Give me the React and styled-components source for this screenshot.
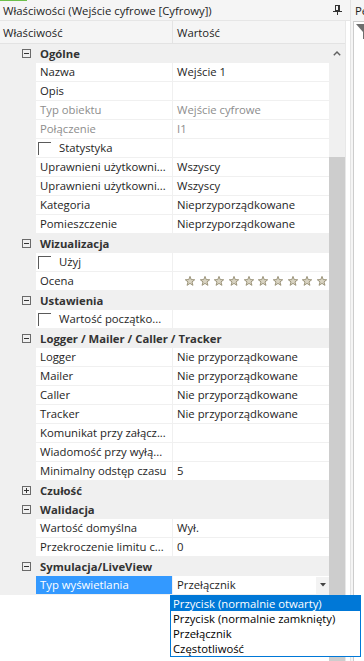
import React from "react";
import styled, { createGlobalStyle } from "styled-components";

const GlobalStyle = createGlobalStyle`
  html, body {
    margin: 0;
    padding: 0;
    background: #ffffff;
  }
  body {
    font-family: "Open Sans", "Noto Sans", sans-serif;
    font-size: 11.3px;
    color: #1e1e1e;
  }
`;

const sections = [
  {
    title: "Ogólne",
    open: true,
    rows: [
      { name: "Nazwa", value: "Wejście 1" },
      { name: "Opis", value: "" },
      { name: "Typ obiektu", value: "Wejście cyfrowe", disabled: true },
      { name: "Połączenie", value: "I1", disabled: true },
      { name: "Statystyka", check: true },
      { name: "Uprawnieni użytkowni...", value: "Wszyscy" },
      { name: "Uprawnieni użytkowni...", value: "Wszyscy" },
      { name: "Kategoria", value: "Nieprzyporządkowane" },
      { name: "Pomieszczenie", value: "Nieprzyporządkowane" },
    ],
  },
  {
    title: "Wizualizacja",
    open: true,
    rows: [
      { name: "Użyj", check: true },
      { name: "Ocena", stars: 10 },
    ],
  },
  {
    title: "Ustawienia",
    open: true,
    rows: [{ name: "Wartość początko...", check: true }],
  },
  {
    title: "Logger / Mailer / Caller / Tracker",
    open: true,
    rows: [
      { name: "Logger", value: "Nie przyporządkowane" },
      { name: "Mailer", value: "Nie przyporządkowane" },
      { name: "Caller", value: "Nie przyporządkowane" },
      { name: "Tracker", value: "Nie przyporządkowane" },
      { name: "Komunikat przy załącz...", value: "" },
      { name: "Wiadomość przy wyłą...", value: "" },
      { name: "Minimalny odstęp czasu", value: "5" },
    ],
  },
  { title: "Czułość", open: false, rows: [] },
  {
    title: "Walidacja",
    open: true,
    rows: [
      { name: "Wartość domyślna", value: "Wył." },
      { name: "Przekroczenie limitu c...", value: "0" },
    ],
  },
  {
    title: "Symulacja/LiveView",
    open: true,
    rows: [{ name: "Typ wyświetlania", value: "Przełącznik", selected: true, combo: true }],
  },
];

const options = [
  "Przycisk (normalnie otwarty)",
  "Przycisk (normalnie zamknięty)",
  "Przełącznik",
  "Częstotliwość",
];

const Window = styled.div`
  position: relative;
  width: 364px;
  height: 661px;
  display: flex;
  overflow: hidden;
  background: #ffffff;
`;

const LeftPanel = styled.div`
  width: 350px;
  display: flex;
  flex-direction: column;
`;

const TitleBar = styled.div`
  position: relative;
  height: 20px;
  border-bottom: 1px solid #e6e6e6;
  background: #f5f5f5;
  display: flex;
  align-items: center;
  justify-content: space-between;
  padding: 0 8px 0 3px;
  white-space: nowrap;
`;

const AccentLine = styled.div`
  position: absolute;
  left: 0;
  top: 0;
  width: 27px;
  height: 1px;
  background: #6cbf4a;
`;

const Content = styled.div`
  flex: 1;
  display: flex;
  padding-right: 4px;
`;

const Main = styled.div`
  width: 346px;
  display: flex;
  flex-direction: column;
  border-right: 1px solid #e8e8e8;
  box-sizing: border-box;
`;

const Header = styled.div`
  height: 22px;
  border-bottom: 1px solid #e3e3e3;
  background: #f5f5f5;
  display: flex;
  align-items: center;
`;

const HeaderCell = styled.div`
  width: ${(p) => p.$width || "auto"};
  flex: ${(p) => (p.$width ? "none" : 1)};
  height: 100%;
  display: flex;
  align-items: center;
  padding-left: ${(p) => p.$pad || "4px"};
  box-sizing: border-box;
  border-right: ${(p) => (p.$line ? "1px solid #e3e3e3" : "none")};
`;

const Body = styled.div`
  flex: 1;
  display: flex;
`;

const Grid = styled.div`
  width: 330px;
  display: flex;
  flex-direction: column;
`;

const CategoryRow = styled.div`
  height: 19px;
  display: flex;
  align-items: center;
  background: #f0f0f0;
  font-weight: 700;
  color: #333333;
  white-space: nowrap;
`;

const Gutter = styled.div`
  width: 36px;
  height: 100%;
  flex: none;
  background: #f0f0f0;
  display: flex;
  align-items: center;
  justify-content: flex-end;
  padding-right: 5px;
  box-sizing: border-box;
`;

const CategoryLabel = styled.div`
  padding-left: 4px;
  line-height: 18px;
`;

const Row = styled.div`
  height: 19px;
  display: flex;
`;

const NameCell = styled.div`
  width: 137px;
  flex: none;
  box-sizing: border-box;
  border-right: 1px solid #f0f0f0;
  border-bottom: 1px solid #f0f0f0;
  background: ${(p) => (p.$selected ? "#3399ff" : "#ffffff")};
  color: ${(p) => (p.$selected ? "#ffffff" : p.$disabled ? "#8d8d8d" : "#1e1e1e")};
  display: flex;
  align-items: center;
  padding-left: ${(p) => (p.$check ? "2px" : "4px")};
  white-space: nowrap;
  overflow: hidden;
  line-height: 18px;
`;

const ValueCell = styled.div`
  flex: 1;
  box-sizing: border-box;
  border-bottom: 1px solid #f0f0f0;
  color: ${(p) => (p.$disabled ? "#8d8d8d" : "#1e1e1e")};
  display: flex;
  align-items: center;
  padding-left: 4px;
  white-space: nowrap;
  overflow: hidden;
  line-height: 18px;
`;

const CheckBox = styled.span`
  width: 12px;
  height: 12px;
  flex: none;
  border-top: 1px solid #5a5a5a;
  border-left: 1px solid #5a5a5a;
  margin-right: 8px;
`;

const Stars = styled.div`
  display: flex;
  gap: 4.67px;
  padding-left: 8px;
`;

const ComboText = styled.span`
  flex: 1;
`;

const ComboButton = styled.div`
  width: 13px;
  height: 17px;
  background: #f3f3f3;
  display: flex;
  align-items: center;
  justify-content: center;
`;

const Scrollbar = styled.div`
  width: 16px;
  background: #f0f0f0;
  display: flex;
  flex-direction: column;
`;

const ScrollArrow = styled.div`
  height: 19px;
  display: flex;
  align-items: center;
  justify-content: center;
`;

const ScrollTrack = styled.div`
  height: 94px;
`;

const ScrollThumb = styled.div`
  flex: 1;
  background: #cdcdcd;
`;

const RightPanel = styled.div`
  flex: 1;
  border-left: 1px solid #e3e3e3;
  background: #f5f5f5;
  display: flex;
  flex-direction: column;
`;

const RightTitle = styled.div`
  height: 21px;
  display: flex;
  align-items: center;
  padding-left: 4px;
  white-space: nowrap;
`;

const RightBox = styled.div`
  flex: 1;
  margin-left: 2px;
  border-left: 1px solid #cccccc;
  border-top: 1px solid #cccccc;
  background: #ffffff;
  padding: 2px 0 0 2px;
`;

const Dropdown = styled.div`
  position: absolute;
  left: 170px;
  top: 595px;
  width: 191px;
  border: 1px solid #0078d7;
  background: #ffffff;
  box-sizing: border-box;
`;

const Option = styled.div`
  height: 15px;
  line-height: 15px;
  padding-left: 2px;
  white-space: nowrap;
  background: ${(p) => (p.$active ? "#0078d7" : "transparent")};
  color: ${(p) => (p.$active ? "#ffffff" : "#000000")};
`;

const Expander = ({ open }) => (
  <svg width="9" height="9" viewBox="0 0 9 9">
    <rect x="0.5" y="0.5" width="8" height="8" fill="none" stroke="#6a6a6a" />
    <line x1="2" y1="4.5" x2="7" y2="4.5" stroke="#333" />
    {!open && <line x1="4.5" y1="2" x2="4.5" y2="7" stroke="#333" />}
  </svg>
);

const Star = () => (
  <svg width="10" height="10" viewBox="0 0 10 10">
    <polygon
      points="5,0.4 6.23,3.6 9.7,3.75 7,5.95 7.94,9.35 5,7.4 2.06,9.35 3,5.95 0.3,3.75 3.77,3.6"
      fill="#d9d4c3"
      stroke="#948c72"
      strokeWidth="0.9"
      strokeLinejoin="round"
    />
  </svg>
);

const PinIcon = () => (
  <svg width="9" height="10" viewBox="0 0 9 10">
    <rect x="2.5" y="0.5" width="4" height="5" fill="none" stroke="#333" />
    <line x1="5.5" y1="0.5" x2="5.5" y2="5.5" stroke="#333" />
    <line x1="0" y1="6.5" x2="9" y2="6.5" stroke="#333" />
    <line x1="4.5" y1="6.5" x2="4.5" y2="10" stroke="#333" />
  </svg>
);

const PropertyRow = ({ row }) => (
  <Row>
    <Gutter />
    <NameCell $selected={row.selected} $disabled={row.disabled} $check={row.check}>
      {row.check && <CheckBox />}
      {row.name}
    </NameCell>
    <ValueCell $disabled={row.disabled}>
      {row.stars ? (
        <Stars>
          {Array.from({ length: row.stars }).map((_, i) => (
            <Star key={i} />
          ))}
        </Stars>
      ) : row.combo ? (
        <>
          <ComboText>{row.value}</ComboText>
          <ComboButton>
            <svg width="6" height="4" viewBox="0 0 6 4">
              <polygon points="0,0 6,0 3,3.5" fill="#444" />
            </svg>
          </ComboButton>
        </>
      ) : (
        row.value
      )}
    </ValueCell>
  </Row>
);

export default function App() {
  return (
    <>
      <GlobalStyle />
      <Window>
        <LeftPanel>
          <TitleBar>
            <AccentLine />
            <span>Właściwości (Wejście cyfrowe [Cyfrowy])</span>
            <PinIcon />
          </TitleBar>
          <Content>
            <Main>
              <Header>
                <HeaderCell $width="173px" $pad="3px" $line>
                  Właściwość
                </HeaderCell>
                <HeaderCell>Wartość</HeaderCell>
              </Header>
              <Body>
                <Grid>
                  {sections.map((section) => (
                    <React.Fragment key={section.title}>
                      <CategoryRow>
                        <Gutter>
                          <Expander open={section.open} />
                        </Gutter>
                        <CategoryLabel>{section.title}</CategoryLabel>
                      </CategoryRow>
                      {section.rows.map((row, i) => (
                        <PropertyRow key={i} row={row} />
                      ))}
                    </React.Fragment>
                  ))}
                </Grid>
                <Scrollbar>
                  <ScrollArrow>
                    <svg width="8" height="5" viewBox="0 0 8 5">
                      <polyline points="0.8,4.3 4,1 7.2,4.3" fill="none" stroke="#606060" strokeWidth="1.4" />
                    </svg>
                  </ScrollArrow>
                  <ScrollTrack />
                  <ScrollThumb />
                </Scrollbar>
              </Body>
            </Main>
          </Content>
        </LeftPanel>
        <RightPanel>
          <RightTitle>Pe</RightTitle>
          <RightBox>
            <svg width="11" height="15" viewBox="0 0 11 15">
              <polygon points="0,0 11,0 11,15 7,15 7,8" fill="#6e6e6e" />
            </svg>
          </RightBox>
        </RightPanel>
        <Dropdown>
          {options.map((opt, i) => (
            <Option key={opt} $active={i === 0}>
              {opt}
            </Option>
          ))}
        </Dropdown>
      </Window>
    </>
  );
}
